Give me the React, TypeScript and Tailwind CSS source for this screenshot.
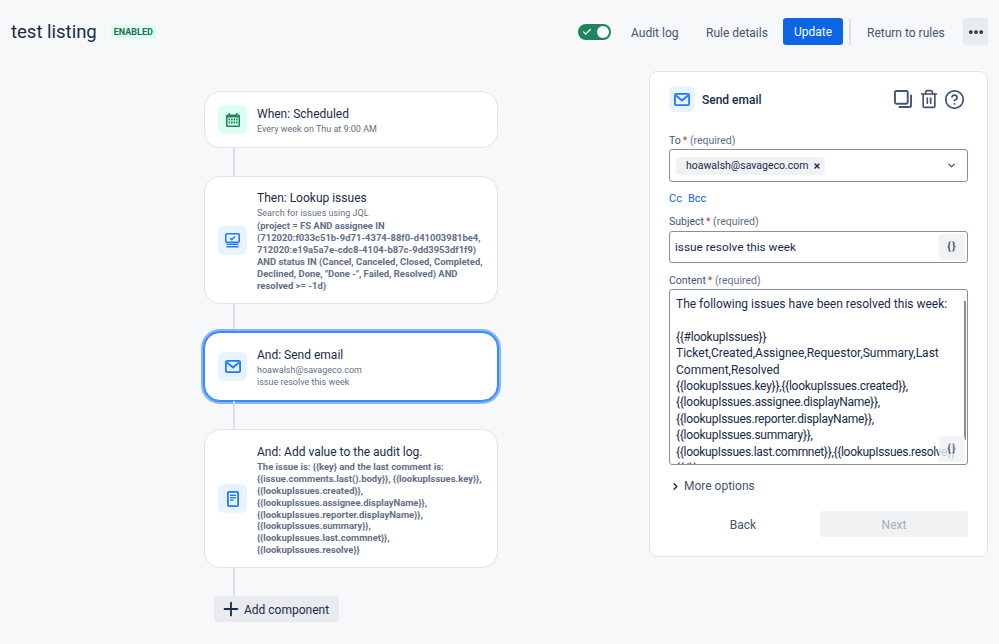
import React from 'react';
import { ChevronDown, ChevronRight, CircleHelp, Plus, Trash2, X, Ellipsis, Check } from 'lucide-react';

const font = { fontFamily: 'Roboto, "Noto Sans", sans-serif' };

const CalendarIcon = () => (
  <svg width="16" height="16" viewBox="0 0 16 16" fill="none">
    <rect x="1" y="2.5" width="14" height="12.5" rx="1.5" fill="#1f845a" />
    <rect x="3.5" y="1" width="1.5" height="3" fill="#1f845a" />
    <rect x="11" y="1" width="1.5" height="3" fill="#1f845a" />
    <rect x="2.5" y="5.5" width="11" height="8" fill="#dcfff1" />
    {[3.5, 6, 8.5, 11].map((x) =>
      [6.5, 9.5].map((y) => <rect key={`${x}-${y}`} x={x} y={y} width="1.6" height="2" fill="#1f845a" />),
    )}
  </svg>
);

const MailIcon = () => (
  <svg width="16" height="13" viewBox="0 0 16 13" fill="none">
    <rect x="0.9" y="0.9" width="14.2" height="11.2" rx="1.4" fill="#e9f2ff" stroke="#1d7afc" strokeWidth="1.8" />
    <path d="M2 2.5 8 7.5 14 2.5" stroke="#1d7afc" strokeWidth="1.8" />
  </svg>
);

const LookupIcon = () => (
  <svg width="15" height="15" viewBox="0 0 15 15" fill="none">
    <rect x="0.8" y="0.8" width="13.4" height="8.4" rx="1" fill="#e9f2ff" stroke="#1d7afc" strokeWidth="1.6" />
    <path d="M5 5 6.8 6.8 10 3.4" stroke="#1d7afc" strokeWidth="1.4" />
    <rect x="1.5" y="10.5" width="12" height="1.5" fill="#1d7afc" />
    <rect x="1.5" y="13" width="12" height="1.5" fill="#1d7afc" />
  </svg>
);

const LogIcon = () => (
  <svg width="12" height="16" viewBox="0 0 12 16" fill="none">
    <rect x="0.9" y="0.9" width="10.2" height="14.2" rx="1.2" fill="#e9f2ff" stroke="#1d7afc" strokeWidth="1.8" />
    <rect x="3" y="3.6" width="6" height="1.4" fill="#1d7afc" />
    <rect x="3" y="6" width="6" height="1.4" fill="#1d7afc" />
    <rect x="3" y="8.4" width="3.5" height="1.4" fill="#1d7afc" />
  </svg>
);

const CopyIcon = () => (
  <svg width="18" height="18" viewBox="0 0 19 19" fill="none" stroke="#44546f" strokeWidth="2">
    <rect x="1" y="1" width="13.5" height="13.5" rx="1.5" />
    <path d="M18 5v11.5a1.5 1.5 0 0 1-1.5 1.5H5" />
  </svg>
);

const IconBox = ({ green, children }: { green?: boolean; children: React.ReactNode }) => (
  <div className={`flex h-[29px] w-[29px] shrink-0 items-center justify-center rounded-[6px] ${green ? 'bg-[#dcfff1]' : 'bg-[#e9f2ff]'}`}>
    {children}
  </div>
);

const Connector = () => <div className="ml-[29px] h-[28px] w-[2px] bg-[#dcdfe4]" />;

const FlowCard = ({
  icon,
  green,
  title,
  selected,
  className,
  textClass = 'pt-[2px]',
  children,
}: {
  icon: React.ReactNode;
  green?: boolean;
  title: string;
  selected?: boolean;
  className: string;
  textClass?: string;
  children: React.ReactNode;
}) => (
  <div
    className={`flex items-center gap-[10px] rounded-[16px] bg-white pl-[13px] pr-[8px] ${className} ${
      selected ? 'border border-[#388bff] shadow-[0_0_0_1px_#388bff,0_0_0_3px_#85b8ff]' : 'border border-[#e2e4e9]'
    }`}
  >
    <IconBox green={green}>{icon}</IconBox>
    <div className={`min-w-0 ${textClass}`}>
      <div className="mb-[1px] text-[12px] leading-[16px] text-[#172b4d]">{title}</div>
      {children}
    </div>
  </div>
);

const Sub = ({ children }: { children: React.ReactNode }) => (
  <div className="text-[9px] leading-[12px] text-[#626f86]">{children}</div>
);

const Strong = ({ children }: { children: React.ReactNode }) => (
  <div className="text-[9.45px] font-bold leading-[11.9px] text-[#626f86] whitespace-nowrap">{children}</div>
);

const FieldLabel = ({ name, className }: { name: string; className: string }) => (
  <div className={`h-[14px] text-[10.5px] leading-[16px] text-[#44546f] ${className}`}>
    {name}
    <span className="ml-[2px] text-[#c9372c]">*</span> <span className="text-[#626f86]">(required)</span>
  </div>
);

const BraceButton = ({ className }: { className: string }) => (
  <div className={`flex h-[26px] w-[26px] items-center justify-center rounded-[3px] bg-[#f1f2f4] text-[11px] font-bold tracking-[1px] text-[#44546f] ${className}`}>
    {'{}'}
  </div>
);

export default function App() {
  return (
    <div className="h-[644px] w-[999px] overflow-hidden bg-[#f7f8fa] text-[#172b4d]" style={font}>
      <header className="flex h-[63px] items-center pl-[11px] pr-[11px]">
        <h1 className="pt-[1px] text-[18.5px] leading-[24px] text-[#172b4d]">test listing</h1>
        <span className="ml-[14px] rounded-[3px] bg-[#dcfff1] px-[3px] pt-[1px] text-[9px] font-bold leading-[13px] text-[#216e4e]">ENABLED</span>
        <div className="ml-auto flex items-center">
          <div className="flex h-[16px] w-[33px] items-center justify-between rounded-full bg-[#1f845a] pl-[4px] pr-[2px]">
            <Check size={10} strokeWidth={3} className="text-white" />
            <div className="h-[12px] w-[12px] rounded-full bg-white" />
          </div>
          <span className="ml-[20px] w-[49px] pt-[3px] text-[12px] text-[#44546f]">Audit log</span>
          <span className="ml-[26px] w-[62px] pt-[3px] text-[12px] text-[#44546f]">Rule details</span>
          <button className="ml-[15px] h-[27px] w-[60px] rounded-[3px] bg-[#0c66e4] pt-[1px] text-[12px] text-white">Update</button>
          <div className="ml-[6px] h-[26px] w-[2px] bg-[#dcdfe4]" />
          <span className="ml-[16px] w-[79px] pt-[3px] text-[12px] text-[#44546f]">Return to rules</span>
          <div className="ml-[17px] flex h-[27px] w-[25px] items-center justify-center rounded-[3px] bg-[#e9ebee]">
            <Ellipsis size={18} strokeWidth={3} className="text-[#172b4d]" />
          </div>
        </div>
      </header>

      <main className="flex items-start">
        <section className="ml-[204px] mt-[28px] w-[294px]">
          <FlowCard icon={<CalendarIcon />} green title="When: Scheduled" className="h-[57px]">
            <Sub>Every week on Thu at 9:00 AM</Sub>
          </FlowCard>
          <Connector />
          <FlowCard icon={<LookupIcon />} title="Then: Lookup issues" className="h-[128px]">
            <Sub>Search for issues using JQL</Sub>
            <div className="h-[1px]" />
            <Strong>(project = FS AND assignee IN</Strong>
            <Strong>(712020:f033c51b-9d71-4374-88f0-d41003981be4,</Strong>
            <Strong>712020:e19a5a7e-cdc8-4104-b87c-9dd3953df1f9)</Strong>
            <Strong>AND status IN (Cancel, Canceled, Closed, Completed,</Strong>
            <Strong>Declined, Done, "Done -", Failed, Resolved) AND</Strong>
            <Strong>resolved &gt;= -1d)</Strong>
          </FlowCard>
          <Connector />
          <FlowCard icon={<MailIcon />} title="And: Send email" selected className="h-[69px]">
            <Sub>hoawalsh@savageco.com</Sub>
            <Sub>issue resolve this week</Sub>
          </FlowCard>
          <Connector />
          <FlowCard icon={<LogIcon />} title="And: Add value to the audit log." className="h-[139px]" textClass="pt-[3px]">
            <Strong>The issue is: {'{{key}'} and the last comment is:</Strong>
            <Strong>{'{{issue.comments.last().body}}, {{lookupIssues.key}},'}</Strong>
            <Strong>{'{{lookupIssues.created}},'}</Strong>
            <Strong>{'{{lookupIssues.assignee.displayName}},'}</Strong>
            <Strong>{'{{lookupIssues.reporter.displayName}},'}</Strong>
            <Strong>{'{{lookupIssues.summary}},'}</Strong>
            <Strong>{'{{lookupIssues.last.commnet}},'}</Strong>
            <Strong>{'{{lookupIssues.resolve}}'}</Strong>
          </FlowCard>
          <Connector />
          <button className="ml-[10px] flex h-[26px] w-[125px] items-center gap-[2px] rounded-[3px] bg-[#e9ebee] pl-[6px] text-[12px] text-[#172b4d]">
            <Plus size={22} strokeWidth={2} />
            <span className="pt-[1px]">Add component</span>
          </button>
        </section>

        <aside className="ml-[151px] mt-[8px] h-[486px] w-[339px] rounded-[8px] border border-[#e2e4e9] bg-white px-[19px] pt-[14px]">
          <div className="flex h-[26px] items-center">
            <div className="flex h-[26px] w-[26px] items-center justify-center rounded-[6px] bg-[#e9f2ff]">
              <MailIcon />
            </div>
            <span className="ml-[7px] pt-[1px] text-[12px] font-medium text-[#172b4d]">Send email</span>
            <div className="ml-auto flex items-center pr-[3px] text-[#44546f]">
              <CopyIcon />
              <Trash2 size={20} strokeWidth={2} className="ml-[7px]" />
              <CircleHelp size={21} strokeWidth={2} className="ml-[5px]" />
            </div>
          </div>

          <FieldLabel name="To" className="mt-[21px]" />
          <div className="mt-[2px] flex h-[33px] items-center rounded-[3px] border border-[#8590a2] pl-[6px] pr-[10px]">
            <div className="flex h-[18px] w-[149px] items-center rounded-[3px] bg-[#f1f2f4] pl-[10px] text-[10.5px] text-[#172b4d]">
              hoawalsh@savageco.com
              <X size={8} strokeWidth={4} className="ml-auto mr-[4px]" />
            </div>
            <ChevronDown size={11} strokeWidth={3} className="ml-auto text-[#44546f]" />
          </div>

          <div className="mt-[9px] flex h-[14px] gap-[6px] text-[11px] leading-[16px] text-[#0c66e4]">
            <span>Cc</span>
            <span>Bcc</span>
          </div>

          <FieldLabel name="Subject" className="mt-[9px]" />
          <div className="mt-[3px] flex h-[32px] items-center justify-between rounded-[3px] border border-[#8590a2] pl-[5px] pr-[2px] text-[11.8px] text-[#172b4d]">
            <span className="pt-[2px]">issue resolve this week</span>
            <BraceButton className="" />
          </div>

          <FieldLabel name="Content" className="mt-[10px]" />
          <div className="relative mt-[2px] h-[176px] overflow-hidden rounded-[3px] border border-[#8590a2] pl-[6px] pt-[6px] text-[12px] leading-[16.4px] text-[#172b4d] whitespace-nowrap">
            <div>The following issues have been resolved this week:</div>
            <div className="h-[16.4px]" />
            <div className="tracking-[-0.25px]">{'{{#lookupIssues}}'}</div>
            <div>Ticket,Created,Assignee,Requestor,Summary,Last</div>
            <div>Comment,Resolved</div>
            <div className="tracking-[-0.25px]">{'{{lookupIssues.key}},{{lookupIssues.created}},'}</div>
            <div className="tracking-[-0.25px]">{'{{lookupIssues.assignee.displayName}},'}</div>
            <div className="tracking-[-0.25px]">{'{{lookupIssues.reporter.displayName}},'}</div>
            <div className="tracking-[-0.25px]">{'{{lookupIssues.summary}},'}</div>
            <div className="tracking-[-0.3px]">{'{{lookupIssues.last.commnet}},{{lookupIssues.resolve}}'}</div>
            <div>{'{{/}}'}</div>
            <div className="absolute right-[1px] top-[11px] h-[139px] w-[2px] bg-[#8c8f94]" />
            <BraceButton className="absolute bottom-[2px] right-[2px] opacity-80" />
          </div>

          <div className="mt-[13px] flex h-[16px] items-center gap-[3px] pl-[1px] text-[12px] text-[#44546f]">
            <ChevronRight size={11} strokeWidth={3} className="text-[#172b4d]" />
            More options
          </div>

          <div className="mt-[17px] flex h-[26px] items-center gap-[3px] text-[12px]">
            <span className="w-[148px] pt-[1px] text-center text-[#44546f]">Back</span>
            <button className="h-[26px] w-[148px] rounded-[3px] bg-[#f1f2f4] pt-[1px] text-[#a5adba]">Next</button>
          </div>
        </aside>
      </main>
    </div>
  );
}
